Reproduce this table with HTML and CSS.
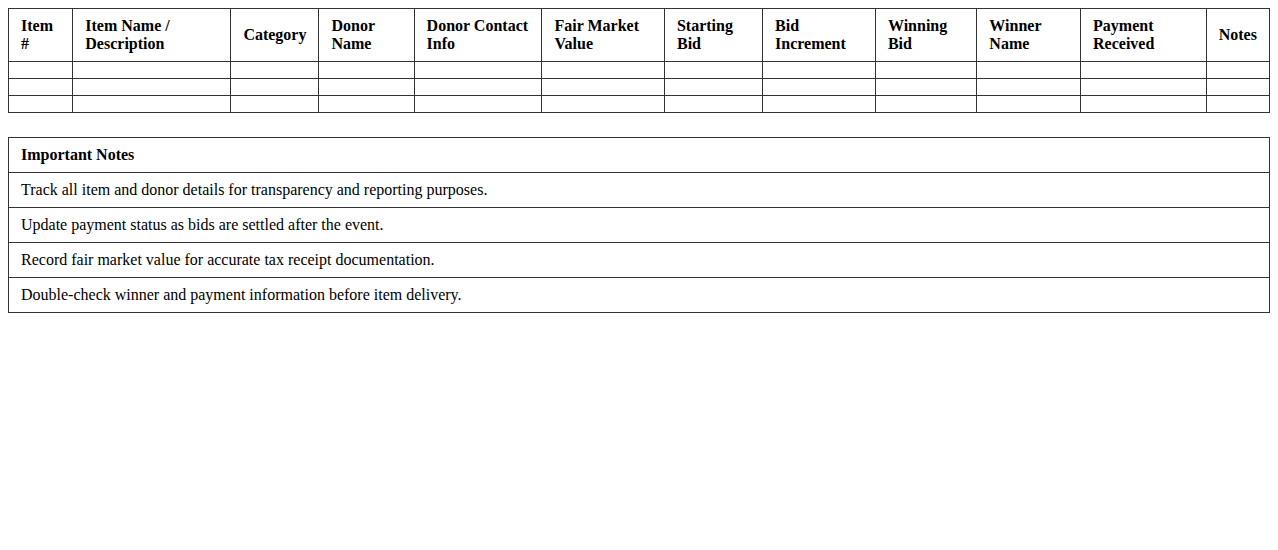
FILE: index.html
```html
<!DOCTYPE html>
<html>
<head>
<meta charset="utf-8">
<link rel="stylesheet" href="styles.css">
</head>
<body>
<table class="grid">
  <thead>
    <tr>
      <th>Item #</th>
      <th>Item Name / Description</th>
      <th>Category</th>
      <th>Donor Name</th>
      <th>Donor Contact Info</th>
      <th>Fair Market Value</th>
      <th>Starting Bid</th>
      <th>Bid Increment</th>
      <th>Winning Bid</th>
      <th>Winner Name</th>
      <th>Payment Received</th>
      <th>Notes</th>
    </tr>
  </thead>
  <tbody>
    <tr><td></td><td></td><td></td><td></td><td></td><td></td><td></td><td></td><td></td><td></td><td></td><td></td></tr>
    <tr><td></td><td></td><td></td><td></td><td></td><td></td><td></td><td></td><td></td><td></td><td></td><td></td></tr>
    <tr><td></td><td></td><td></td><td></td><td></td><td></td><td></td><td></td><td></td><td></td><td></td><td></td></tr>
  </tbody>
</table>
<table class="grid notes">
  <thead>
    <tr><th>Important Notes</th></tr>
  </thead>
  <tbody>
    <tr><td>Track all item and donor details for transparency and reporting purposes.</td></tr>
    <tr><td>Update payment status as bids are settled after the event.</td></tr>
    <tr><td>Record fair market value for accurate tax receipt documentation.</td></tr>
    <tr><td>Double-check winner and payment information before item delivery.</td></tr>
  </tbody>
</table>
</body>
</html>
```
FILE: styles.css
```css
body {
  margin: 8px;
  font-family: "Liberation Serif", "Times New Roman", serif;
  font-size: 16px;
  color: #000;
  background: #fff;
}
.grid {
  width: 100%;
  border-collapse: collapse;
  margin-bottom: 24px;
}
.grid th,
.grid td {
  border: 1px solid #333;
  padding: 8px 12px;
  text-align: left;
  vertical-align: middle;
}
.grid th {
  font-weight: bold;
}
```
